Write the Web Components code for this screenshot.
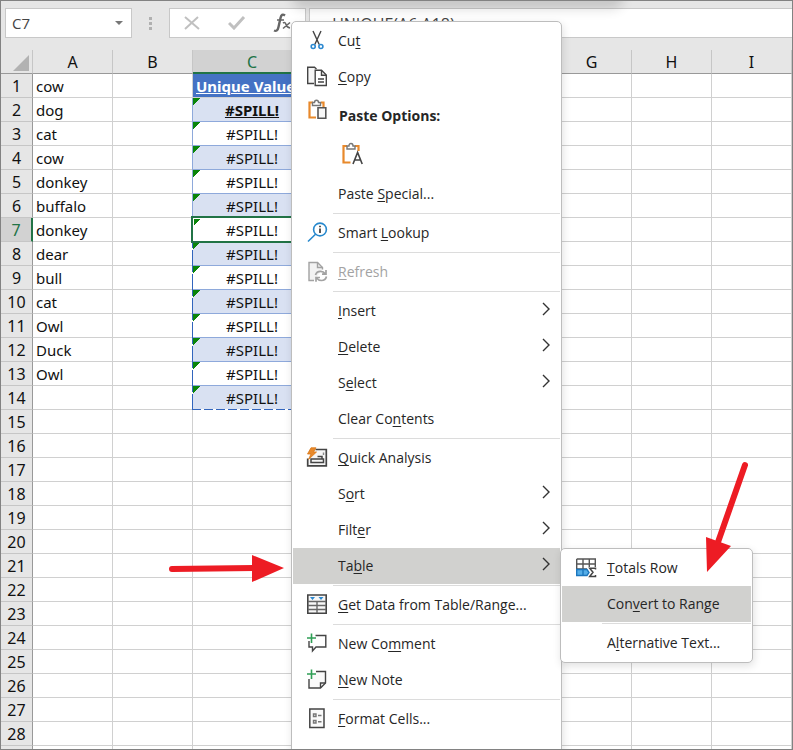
<!DOCTYPE html>
<html lang="en">
<head>
<meta charset="utf-8">
<title>Spreadsheet</title>
<style>
html, body { margin: 0; height: 100%; }
body { overflow: hidden; font-family: "Open Sans", "Noto Sans", sans-serif; }
</style>
</head>
<body>
<sheet-window>
  <formula-bar slot="bar" cell="C7" formula="=UNIQUE(A6:A18)"></formula-bar>
  <sheet-grid slot="grid"></sheet-grid>
  <hover-shade slot="overlay"></hover-shade>
  <context-menu slot="overlay" class="main">
    <menu-item icon="cut">Cu<u>t</u></menu-item>
    <menu-item icon="copy"><u>C</u>opy</menu-item>
    <paste-options>Paste Options:</paste-options>
    <menu-item>Paste <u>S</u>pecial...</menu-item>
    <menu-line></menu-line>
    <menu-item icon="lookup">Smart <u>L</u>ookup</menu-item>
    <menu-line></menu-line>
    <menu-item icon="refresh" disabled><u>R</u>efresh</menu-item>
    <menu-line></menu-line>
    <menu-item more><u>I</u>nsert</menu-item>
    <menu-item more><u>D</u>elete</menu-item>
    <menu-item more>S<u>e</u>lect</menu-item>
    <menu-item>Clear Co<u>n</u>tents</menu-item>
    <menu-line></menu-line>
    <menu-item icon="quick"><u>Q</u>uick Analysis</menu-item>
    <menu-item more>S<u>o</u>rt</menu-item>
    <menu-item more>Filt<u>e</u>r</menu-item>
    <menu-item more active>Ta<u>b</u>le</menu-item>
    <menu-line></menu-line>
    <menu-item icon="data"><u>G</u>et Data from Table/Range...</menu-item>
    <menu-line></menu-line>
    <menu-item icon="comment">New Co<u>m</u>ment</menu-item>
    <menu-item icon="note"><u>N</u>ew Note</menu-item>
    <menu-line></menu-line>
    <menu-item icon="format"><u>F</u>ormat Cells...</menu-item>
  </context-menu>
  <context-menu slot="overlay" class="sub">
    <menu-item icon="totals"><u>T</u>otals Row</menu-item>
    <menu-item active>Con<u>v</u>ert to Range</menu-item>
    <menu-line></menu-line>
    <menu-item>A<u>l</u>ternative Text...</menu-item>
  </context-menu>
  <pointer-arrows slot="overlay"></pointer-arrows>
</sheet-window>

<script>
const define = (name, render) => customElements.define(name, class extends HTMLElement {
  connectedCallback() {
    if (this.shadowRoot) return;
    this.attachShadow({ mode: 'open' }).innerHTML = render(this);
  }
});

const svg = (body, w = 22, h = 22) => `<svg width="${w}" height="${h}" viewBox="0 0 ${w} ${h}" fill="none" stroke="#444" stroke-width="1.4" aria-hidden="true">${body}</svg>`;

const icons = {
  cut: svg('<path d="M7 1 13.200 14.500M15 1 8.800 14.500"/><g stroke="#2b88d0" stroke-width="1.6"><circle cx="7.200" cy="16.500" r="2"/><circle cx="14.900" cy="16.500" r="2"/></g>'),
  copy: svg('<path fill="#f6f6f6" d="M8 17.500H1.700V1.200H8.500L10.500 3"/><path fill="#fff" d="M9.200 4.300H15.500L20.300 9V19.500H9.200Z"/><path d="M15.500 4.500V9.300H20M12 13H18M12 16H18"/>'),
  paste: svg('<path stroke="#e8892b" stroke-width="2.200" d="M7 3.500H3.500V18.500H10M15 3.500H17.500V8"/><path stroke="#777" fill="#fff" d="M6.500 6.500V3.500H8.500Q8.500 1.200 10.500 1.200T12.500 3.500H14.500V6.500Z"/><path stroke="#555" fill="#f8f8f8" stroke-width="1.600" d="M12 8.800H19.800V19.300H12Z"/>'),
  pasteText: `<svg width="22" height="24" viewBox="0 0 22 24" fill="none" aria-hidden="true"><path stroke="#e8892b" stroke-width="2.200" d="M6 4H2.500V20.500H9.500M14 4H17.500V9"/><path stroke="#777" stroke-width="1.400" fill="#fff" d="M6 7V4H8Q8 1.500 10 1.500T12 4H14V7Z"/><path stroke="#444" stroke-width="1.600" d="M12 22 16.600 10.500 21.200 22M13.700 18H19.800"/></svg>`,
  lookup: svg('<g stroke="#2788cd" stroke-width="1.600"><circle cx="14" cy="7.500" r="6.400"/><path d="M9.500 12.200 2 19.500"/></g><path stroke-width="1.800" d="M14 6.500V11M14 3.700V5.300"/>'),
  refresh: svg('<g stroke="#a2a2a2"><path fill="#f2f2f2" d="M8 19.500H3V1.500H11.500L16.500 6.500V8.500"/><path d="M11.500 1.500V6.500H16.500"/><path stroke-width="1.700" d="M9.500 14Q10.500 10.300 14.500 10.300 17.500 10.300 19.500 13M20 9V13.200H16M20.500 15.500Q19.500 19.500 15.500 19.500 12.500 19.500 10.500 17M10 20.800V16.500H14"/></g>'),
  quick: svg('<path fill="#f6f6f6" d="M9.500 2.500H20.300V18.800H1.700V11.500" stroke-width="1.700"/><path stroke-width="1.500" d="M5 15.500H17.500V12H5ZM11.500 9.500H16V12"/><path d="M17.500 5.500V8" stroke="#888"/><path fill="#e8892b" stroke="#d97718" stroke-width=".8" d="M5 .800H10L7.500 5H10.500L2.500 12.500 5 7H1.500Z"/>'),
  data: svg('<path fill="#f7f7f7" d="M1.800 1H20.200V19.300H1.800Z" stroke-width="1.600"/><path d="M2 7.500H20M2 11.500H20M2 15.500H20M11 7.500V19" stroke="#666"/><path fill="#2b88d0" stroke="none" d="M4 3H9L6.500 6ZM12.500 3H17.500L15 6Z"/>'),
  comment: svg('<path d="M9.500 2.500H19.800V14H10L6.500 18V14H3V8"/><path stroke="#2f9e55" stroke-width="1.600" d="M5.500 .5V10M1 5H10"/>'),
  note: svg('<path fill="#fafafa" d="M10 2.500H19.500V14L14.500 19H3V10"/><path d="M19.500 14H14.500V19"/><path stroke="#2f9e55" stroke-width="1.600" d="M5.500 .5V10M1 5H10"/>'),
  format: svg('<path fill="#fafafa" stroke-width="1.500" d="M3.800 1H18V19.500H3.800Z"/><path stroke="#777" d="M7.500 6H10V8.500H7.500ZM7.500 12.500H10V15H7.500ZM12 7.500H15.500M12 13.800H15.500"/>'),
  totals: svg('<path fill="#fff" stroke="#555" d="M1.700 2H20.300V10M1.700 2V13M1.700 7H20.300M1.700 12H12M8 2V12M14.300 2V10"/><path fill="#55aee8" stroke="#1c76bd" d="M1.700 12.500H12L14 15.500 12 18.500H1.700ZM8 12.500V18.500"/><path stroke-width="1.500" d="M20.500 12.500V11.300H14.700L18 15.300 14.700 19.500H20.500V18"/>')
};

define('sheet-window', () => `
<style>
  :host { display: flex; flex-direction: column; position: relative; box-sizing: border-box; height: 100vh; overflow: hidden; border: 1px solid #828282; background: #e6e6e6; color: #111; }
  ::slotted(.main) { position: absolute; left: 290px; top: 20px; bottom: -8px; width: 271px; }
  ::slotted(.sub) { position: absolute; left: 559px; top: 547px; width: 193px; }
</style>
<slot name="bar"></slot><slot name="grid"></slot><slot name="overlay"></slot>`);

define('formula-bar', host => `
<style>
  :host { display: flex; align-items: stretch; height: 30px; padding: 7px 0 12px 4px; }
  .box { display: flex; align-items: center; box-sizing: border-box; background: #fff; border: 1px solid #c8c8c8; }
  .name { width: 127px; }
  input { min-width: 0; flex: 1; border: 0; outline: 0; background: none; padding: 0 0 0 6px; font: 15px "Open Sans", sans-serif; color: #444; }
  button { display: flex; align-items: center; justify-content: center; border: 0; background: none; padding: 0; }
  .drop { width: 24px; height: 28px; }
  .grip { width: 37px; display: flex; flex-direction: column; align-items: center; justify-content: center; gap: 2px; }
  .grip i { width: 3px; height: 3px; background: #b0b0b0; }
  .tools { width: 137px; gap: 21px; padding-left: 10px; }
  .tools button { width: 24px; }
  .formula { flex: 1; margin-left: 3px; border-right: 0; }
  .formula input { padding: 2px 0 0 13px; font-size: 16px; }
</style>
<div class="box name"><input aria-label="Name box" value="${host.getAttribute('cell')}"><button class="drop" aria-label="Open name list"><svg width="8" height="4"><path fill="#777" d="M0 0H8L4 4Z"/></svg></button></div>
<div class="grip"><i></i><i></i><i></i></div>
<div class="box tools">
  <button aria-label="Cancel"><svg width="16" height="14" fill="none" stroke="#c0c0c0" stroke-width="2"><path d="M1 1 15 13M14 1 1 13"/></svg></button>
  <button aria-label="Enter"><svg width="18" height="14" fill="none" stroke="#c0c0c0" stroke-width="3"><path d="M1 7 6 12 16 1"/></svg></button>
  <button aria-label="Insert function"><svg width="18" height="20" fill="none" stroke="#666"><path stroke-width="2.400" d="M12 2.500Q8.500 0 7.500 5L5.500 14Q4.500 19 1 17.500"/><path stroke-width="1.600" d="M4 7H11M10 10Q12 8.500 13 11.500T17 15M17 9.500 10 15.500"/></svg></button>
</div>
<div class="box formula"><input aria-label="Formula" value="${host.getAttribute('formula')}"></div>`);

define('sheet-grid', () => {
  const cols = ['A', 'B', 'C', '', '', '', 'G', 'H', 'I'];
  const names = ['cow', 'dog', 'cat', 'cow', 'donkey', 'buffalo', 'donkey', 'dear', 'bull', 'cat', 'Owl', 'Duck', 'Owl'];
  const cell = (c, r) => {
    if (c === 'A') return `<td>${names[r - 1] || ''}</td>`;
    if (c === 'C' && r === 1) return '<td class="title"><u>Unique Values</u></td>';
    if (c === 'C' && r <= 14) {
      const cls = ['spill', r % 2 ? '' : 'band', r === 2 ? 'first' : '', r === 7 ? 'active' : '', r > 7 ? 'dash' : '', r === 14 ? 'last' : ''].join(' ');
      return `<td class="${cls}">#SPILL!</td>`;
    }
    return '<td></td>';
  };
  let rows = '';
  for (let r = 1; r <= 29; r++) rows += `<tr><th scope="row" class="${r === 7 ? 'on' : ''}">${r < 29 ? r : ''}</th>${cols.map(c => cell(c, r)).join('')}</tr>`;
  return `
<style>
  :host { display: block; flex: 1; min-height: 0; overflow: hidden; background: #fff; isolation: isolate; }
  table { width: 100%; table-layout: fixed; border-collapse: separate; border-spacing: 0; font: 15px/20px "Noto Sans", sans-serif; color: #111; }
  th, td { box-sizing: border-box; height: 24px; padding: 2px 3px 1px; border: 0 solid #d0d0d0; border-right-width: 1px; border-bottom-width: 1px; text-align: left; white-space: nowrap; }
  th { background: #e6e6e6; text-align: center; font-size: 16px; font-weight: 400; padding: 2px 0 1px; border-color: #c6c6c6; }
  tbody th { border-right-color: #999; }
  thead th { border-bottom-color: #999; }
  thead th.on { background: #d2d2d2; color: #217346; border-bottom: 2px solid #217346; padding-bottom: 0; }
  tbody th.on { background: #d2d2d2; color: #217346; border-right: 2px solid #217346; }
  .corner svg { display: block; margin: 1px 3px 0 auto; }
  .title { background: #4472c4; color: #fff; font-weight: 700; overflow: hidden; }
  .spill { position: relative; text-align: center; border-bottom-color: #8ea9db; box-shadow: -1px 0 #8ea9db; }
  .spill::before { content: ""; position: absolute; left: 0; top: 0; width: 8px; height: 8px; background: linear-gradient(135deg, #0a850a 50%, transparent 50%); }
  .band { background: #d9e1f2; }
  .first { font-weight: 700; text-decoration: underline; }
  .active::after { content: ""; position: absolute; z-index: 1; inset: -2px -1px -2px -2px; border: 2px solid #217346; }
  .active::before { left: 1px; top: 1px; width: 6px; height: 6px; }
  .dash { box-shadow: none; }
  .dash::after { content: ""; position: absolute; inset: 0 0 -1px -1px; background: repeating-linear-gradient(#3265bd 0 6px, #fff 6px 8px, #3265bd 8px 24px) 0 0 / 1px 100% no-repeat; }
  .last { border-bottom-color: #fff; }
  .last::after { background: repeating-linear-gradient(#3265bd 0 6px, #fff 6px 8px, #3265bd 8px 24px) 0 0 / 1px 100% no-repeat, repeating-linear-gradient(90deg, #3265bd 0 9px, #fff 9px 12px) 0 100% / 100% 1px no-repeat; }
</style>
<table>
  <colgroup><col style="width:32px"><col style="width:80px"><col style="width:80px"><col style="width:119px">${'<col style="width:80px">'.repeat(6)}</colgroup>
  <thead><tr><th class="corner" aria-label="Select all"><svg width="16" height="16"><path fill="#b2b2b2" d="M16 0V16H0Z"/></svg></th>${cols.map(c => `<th scope="col" class="${c === 'C' ? 'on' : ''}">${c}</th>`).join('')}</tr></thead>
  <tbody>${rows}</tbody>
</table>`;
});

define('hover-shade', () => `
<style>
  :host { position: absolute; left: 296px; top: -20px; width: 322px; height: 20px; border-radius: 6px; box-shadow: 0 4px 12px 4px rgba(0,0,0,.14); }
</style>`);

define('context-menu', () => `
<style>
  :host { display: block; box-sizing: border-box; padding: 1px; background: #fff; border: 1px solid #bdbdbd; border-radius: 5px; box-shadow: 1px 3px 8px rgba(0,0,0,.12); }
  div { display: flex; flex-direction: column; }
</style>
<div role="menu"><slot></slot></div>`);

define('menu-item', host => `
<style>
  :host { display: block; }
  button { display: flex; align-items: center; width: 100%; height: 36px; padding: 0 9px 0 13px; border: 0; background: none; color: #262626; font: 14px/20px "Open Sans", "Noto Sans", sans-serif; text-align: left; }
  :host([active]) button { background: #d1d1cf; }
  button:disabled { color: #a3a3a3; }
  .icon { width: 32px; height: 22px; }
  .label { flex: 1; white-space: nowrap; }
  .more { margin-bottom: 4px; }
  ::slotted(u) { text-underline-offset: 2px; }
</style>
<button role="menuitem" ${host.hasAttribute('disabled') ? 'disabled' : ''}>
  <span class="icon">${icons[host.getAttribute('icon')] || ''}</span><span class="label"><slot></slot></span>
  ${host.hasAttribute('more') ? '<svg class="more" width="9" height="14" fill="none" stroke="#333" stroke-width="1.400"><path d="M1 1 7 7 1 13"/></svg>' : ''}
</button>`);

define('paste-options', () => `
<style>
  :host { display: block; color: #262626; }
  .head { display: flex; height: 36px; padding: 4px 0 0 13px; font: 700 14px/34px "Open Sans", "Noto Sans", sans-serif; }
  .icon { width: 33px; line-height: 0; }
  button { display: block; margin: 0 0 0 44px; height: 41px; padding: 0 4px; border: 0; background: none; }
</style>
<div class="head"><span class="icon">${icons.paste}</span><slot></slot></div>
<button aria-label="Keep text only">${icons.pasteText}</button>`);

define('menu-line', () => `
<style>
  :host { display: block; height: 1px; margin: 1px 0 1px 40px; background: #dcdcdc; }
</style>`);

define('pointer-arrows', () => `
<style>
  :host { position: absolute; left: -1px; top: -1px; line-height: 0; pointer-events: none; }
</style>
<svg width="793" height="750" fill="#ed1c24" stroke="#ed1c24" stroke-linecap="round" aria-hidden="true">
  <path stroke-width="6" d="M172 569 254 568M745 465 717 545"/>
  <path stroke="none" d="M252 555 284 568 252 582ZM706 537 731 546 707 572Z"/>
</svg>`);
</script>
</body>
</html>
